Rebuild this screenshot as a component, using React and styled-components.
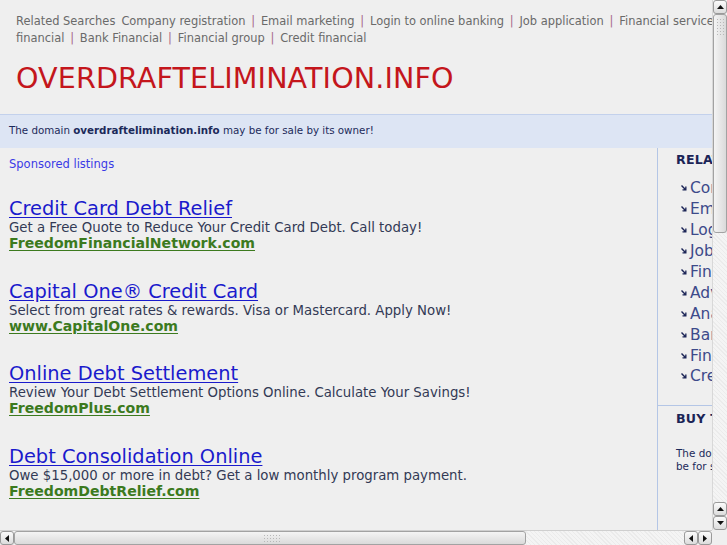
import React from "react";
import styled, { createGlobalStyle } from "styled-components";

const Global = createGlobalStyle`
  html, body { margin: 0; padding: 0; background: #efefef; overflow: hidden; }
  body { font-family: "DejaVu Sans", Verdana, sans-serif; }
`;

const Frame = styled.div`
  width: 727px;
  height: 545px;
  display: grid;
  grid-template-columns: 712px 15px;
  grid-template-rows: 530px 15px;
  background: #efefef;
  overflow: hidden;
`;

const Viewport = styled.div`
  overflow: hidden;
  position: relative;
`;

const Page = styled.div`
  width: 930px;
  font-family: "DejaVu Sans", Verdana, sans-serif;
`;

const Related = styled.div`
  padding: 13px 16px 0;
  font-size: 11.45px;
  line-height: 16.5px;
  color: #6a6a6a;
`;

const RelLabel = styled.span`
  margin-right: 6px;
`;

const RelLink = styled.a`
  color: #6a6a6a;
  text-decoration: none;
`;

const Sep = styled.span`
  color: #a8688a;
  margin: 0 5.8px;
`;

const Title = styled.h1`
  margin: 0;
  padding: 16px 16px 0;
  height: 68px;
  box-sizing: border-box;
  font-weight: normal;
  font-size: 28.6px;
  line-height: 33px;
  color: #c4161c;
  letter-spacing: 0.1px;
`;

const Banner = styled.div`
  border-top: 1px solid #c3d1ec;
  background: #dde5f4;
  height: 33px;
  line-height: 31px;
  padding-left: 9px;
  font-size: 10.3px;
  color: #1c2a5a;
`;

const Columns = styled.div`
  display: flex;
`;

const Main = styled.div`
  width: 658px;
  border-right: 1px solid #b4c6e6;
  padding: 8px 9px 0;
  box-sizing: border-box;
  min-height: 400px;
`;

const Sponsored = styled.div`
  font-size: 11.5px;
  line-height: 16px;
  color: #3a3ae6;
  margin-bottom: 26px;
`;

const Ad = styled.div`
  height: 82.7px;
`;

const AdTitle = styled.a`
  display: block;
  width: max-content;
  font-size: 19.4px;
  line-height: 22px;
  color: #1a1acc;
  text-decoration: underline;
  text-underline-offset: 2px;
`;

const AdDesc = styled.div`
  font-size: 13.3px;
  line-height: 15px;
  color: #333a55;
`;

const AdUrl = styled.a`
  display: block;
  width: max-content;
  font-size: 14.1px;
  line-height: 16px;
  font-weight: bold;
  color: #3c7a1e;
  text-decoration: underline;
  text-underline-offset: 2px;
`;

const Side = styled.div`
  flex: 1;
`;

const SideBlock = styled.div`
  padding: ${(p) => p.$pt || 0}px 0 0 18px;
  border-bottom: ${(p) => (p.$divided ? "1px solid #b4c6e6" : "none")};
  padding-bottom: ${(p) => p.$pb || 0}px;
`;

const SideHead = styled.div`
  font-size: 12.6px;
  font-weight: bold;
  color: #1b2456;
  line-height: 16px;
  margin-bottom: ${(p) => p.$mb}px;
  letter-spacing: 0.2px;
`;

const List = styled.ul`
  list-style: none;
  margin: 0;
  padding: 0 0 0 5px;
`;

const Item = styled.li`
  display: flex;
  align-items: center;
  height: 20.9px;
  font-size: 15.5px;
  color: #3d4a8a;
  white-space: nowrap;
`;

const Arrow = styled.svg`
  width: 6px;
  height: 6px;
  margin-right: 3px;
  flex: none;
`;

const SideText = styled.div`
  font-size: 10.4px;
  line-height: 13px;
  color: #1c2a5a;
  width: 230px;
`;

/* scrollbars */
const VBar = styled.div`
  display: flex;
  flex-direction: column;
  background: #f4f4f4;
  background-image: repeating-linear-gradient(45deg, #ebebeb 0 1px, transparent 1px 3px);
  border-left: 1px solid #d8d8d8;
  box-sizing: border-box;
`;

const HBar = styled.div`
  display: flex;
  background: #f4f4f4;
  background-image: repeating-linear-gradient(45deg, #ebebeb 0 1px, transparent 1px 3px);
  border-top: 1px solid #cfcfcf;
  box-sizing: border-box;
`;

const Corner = styled.div`
  background: #efefef;
`;

const Btn = styled.div`
  width: 14px;
  height: 14px;
  flex: none;
  box-sizing: border-box;
  border: 1px solid #9a9a9a;
  border-radius: 3px;
  background: linear-gradient(#fbfbfb, #dcdcdc);
  display: flex;
  align-items: center;
  justify-content: center;
`;

const Thumb = styled.div`
  flex: none;
  box-sizing: border-box;
  border: 1px solid #a2a2a2;
  border-radius: 3px;
  background: ${(p) =>
    p.$vertical
      ? "linear-gradient(90deg, #f4f4f4, #dadada)"
      : "linear-gradient(#f4f4f4, #dadada)"};
  display: flex;
  align-items: ${(p) => (p.$vertical ? "flex-start" : "center")};
  padding-top: ${(p) => (p.$vertical ? "3px" : "0")};
  justify-content: ${(p) => (p.$vertical ? "center" : "flex-start")};
  padding-left: ${(p) => (p.$vertical ? "0" : "248px")};
`;

const Grip = styled.div`
  width: ${(p) => p.$w}px;
  height: ${(p) => p.$h}px;
  background-image: radial-gradient(circle, #b8b8b8 0.7px, transparent 0.9px);
  background-size: 3px 3px;
`;

const Spacer = styled.div`
  flex: 1;
`;

const Tri = ({ dir }) => {
  const pts = {
    up: "0,5 3.5,1 7,5",
    down: "0,1 3.5,5 7,1",
    left: "5,0 1,3.5 5,7",
    right: "1,0 5,3.5 1,7",
  }[dir];
  const vert = dir === "up" || dir === "down";
  return (
    <svg width={vert ? 7 : 6} height={vert ? 6 : 7} viewBox={vert ? "0 0 7 6" : "0 0 6 7"}>
      <polygon points={pts} fill="#111" />
    </svg>
  );
};

const related = [
  "Company registration",
  "Email marketing",
  "Login to online banking",
  "Job application",
  "Financial services",
  "Advertising",
  "Analysis financial",
  "Bank Financial",
  "Financial group",
  "Credit financial",
];

const sideItems = related;

const ads = [
  {
    t: "Credit Card Debt Relief",
    d: "Get a Free Quote to Reduce Your Credit Card Debt. Call today!",
    u: "FreedomFinancialNetwork.com",
  },
  {
    t: "Capital One® Credit Card",
    d: "Select from great rates & rewards. Visa or Mastercard. Apply Now!",
    u: "www.CapitalOne.com",
  },
  {
    t: "Online Debt Settlement",
    d: "Review Your Debt Settlement Options Online. Calculate Your Savings!",
    u: "FreedomPlus.com",
  },
  {
    t: "Debt Consolidation Online",
    d: "Owe $15,000 or more in debt? Get a low monthly program payment.",
    u: "FreedomDebtRelief.com",
  },
];

export default function App() {
  return (
    <>
      <Global />
      <Frame>
        <Viewport>
          <Page>
            <Related>
              <RelLabel>Related Searches</RelLabel>
              {related.map((r, i) => (
                <React.Fragment key={r}>
                  {i > 0 && <Sep>|</Sep>}
                  <RelLink href="#">{r}</RelLink>
                </React.Fragment>
              ))}
            </Related>
            <Title>OVERDRAFTELIMINATION.INFO</Title>
            <Banner>
              The domain <b>overdraftelimination.info</b> may be for sale by its owner!
            </Banner>
            <Columns>
              <Main>
                <Sponsored>Sponsored listings</Sponsored>
                {ads.map((a) => (
                  <Ad key={a.t}>
                    <AdTitle href="#">{a.t}</AdTitle>
                    <AdDesc>{a.d}</AdDesc>
                    <AdUrl href="#">{a.u}</AdUrl>
                  </Ad>
                ))}
              </Main>
              <Side>
                <SideBlock $divided $pt={4} $pb={18}>
                  <SideHead $mb={10}>RELATED SEARCHES</SideHead>
                  <List>
                    {sideItems.map((s) => (
                      <Item key={s}>
                        <Arrow viewBox="0 0 6 6">
                          <polygon points="0,1 1,0 4.2,3.2 4.2,1.5 5.5,1.5 5.5,5.5 1.5,5.5 1.5,4.2 3.2,4.2" fill="#1b2456" />
                        </Arrow>
                        {s}
                      </Item>
                    ))}
                  </List>
                </SideBlock>
                <SideBlock $pt={5}>
                  <SideHead $mb={20}>BUY THIS DOMAIN</SideHead>
                  <SideText>
                    The domain overdraftelimination.info may be for sale by its owner!
                  </SideText>
                </SideBlock>
              </Side>
            </Columns>
          </Page>
        </Viewport>
        <VBar>
          <Btn>
            <Tri dir="up" />
          </Btn>
          <Thumb $vertical style={{ height: 219 }}>
            <Grip $w={8} $h={17} />
          </Thumb>
          <Spacer />
          <Btn>
            <Tri dir="up" />
          </Btn>
          <Btn>
            <Tri dir="down" />
          </Btn>
        </VBar>
        <HBar>
          <Btn>
            <Tri dir="left" />
          </Btn>
          <Thumb style={{ width: 512 }}>
            <Grip $w={17} $h={8} />
          </Thumb>
          <Spacer />
          <Btn>
            <Tri dir="left" />
          </Btn>
          <Btn>
            <Tri dir="right" />
          </Btn>
        </HBar>
        <Corner />
      </Frame>
    </>
  );
}
